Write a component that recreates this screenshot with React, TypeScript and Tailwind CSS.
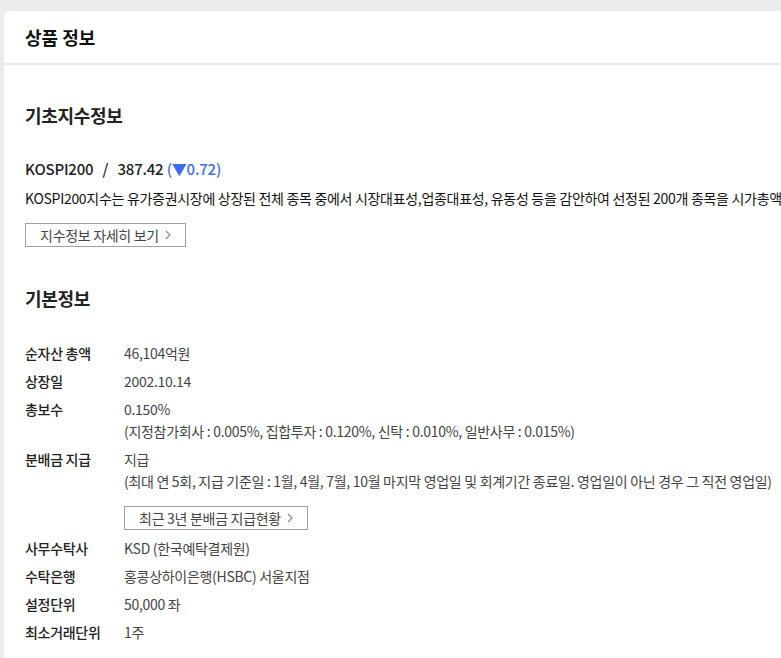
const font = { fontFamily: '"Noto Sans CJK KR", "Noto Sans", sans-serif' };

type Row = {
  label: string;
  value: string;
  sub?: string;
  button?: string;
};

const rows: Row[] = [
  { label: '순자산 총액', value: '46,104억원' },
  { label: '상장일', value: '2002.10.14' },
  {
    label: '총보수',
    value: '0.150%',
    sub: '(지정참가회사 : 0.005%, 집합투자 : 0.120%, 신탁 : 0.010%, 일반사무 : 0.015%)',
  },
  {
    label: '분배금 지급',
    value: '지급',
    sub: '(최대 연 5회, 지급 기준일 : 1월, 4월, 7월, 10월 마지막 영업일 및 회계기간 종료일. 영업일이 아닌 경우 그 직전 영업일)',
    button: '최근 3년 분배금 지급현황',
  },
  { label: '사무수탁사', value: 'KSD (한국예탁결제원)' },
  { label: '수탁은행', value: '홍콩상하이은행(HSBC) 서울지점' },
  { label: '설정단위', value: '50,000 좌' },
  { label: '최소거래단위', value: '1주' },
];

const Chevron = () => (
  <svg width="6" height="10" viewBox="0 0 6 10" className="ml-[6px] text-[#888]">
    <path d="M1 1l4 4-4 4" fill="none" stroke="currentColor" strokeWidth="1.1" />
  </svg>
);

const OutlineButton = ({ label, className = '' }: { label: string; className?: string }) => (
  <button
    className={`flex h-[24px] items-center justify-center border border-[#a0a0a0] bg-white text-[14px] tracking-[-0.3px] text-[#444] ${className}`}
  >
    {label}
    <Chevron />
  </button>
);

export default function App() {
  return (
    <div className="h-[658px] w-[781px] overflow-hidden bg-[#ececec] pl-[4px] pt-[11px]" style={font}>
      <div className="w-[900px] rounded-tl-[6px] bg-white">
        <div className="flex h-[54px] items-center border-b-2 border-[#ececec] pl-[21px]">
          <h1 className="text-[18px] font-bold text-[#111]">상품 정보</h1>
        </div>

        <div className="pl-[21px] pt-[37px] pb-[30px]">
          <h2 className="text-[18px] leading-[26px] font-bold tracking-[-0.3px] text-[#222]">기초지수정보</h2>

          <div className="mt-[30px] text-[15px] leading-[22px] font-medium tracking-[-0.2px] text-[#222]">
            KOSPI200 <span className="mx-[6px]">/</span> 387.42{' '}
            <span className="text-[#3d6cf0]">(▼0.72)</span>
          </div>
          <p className="mt-[7px] whitespace-nowrap text-[14px] leading-[22px] tracking-[-0.3px] text-[#111]">
            KOSPI200지수는 유가증권시장에 상장된 전체 종목 중에서 시장대표성,업종대표성, 유동성 등을 감안하여 선정된 200개 종목을 시가총액
            가중방식으로 산출한 지수입니다.
          </p>
          <OutlineButton label="지수정보 자세히 보기" className="mt-[14px] w-[161px]" />

          <h2 className="mt-[38px] text-[18px] leading-[26px] font-bold tracking-[-0.3px] text-[#222]">기본정보</h2>

          <dl className="mt-[31px] flex flex-col gap-[6px]">
            {rows.map((r) => (
              <div key={r.label} className="flex text-[14px] leading-[22px] tracking-[-0.3px]">
                <dt className="w-[99px] shrink-0 font-medium text-[#222]">{r.label}</dt>
                <dd className="whitespace-nowrap text-[#444]">
                  <div>{r.value}</div>
                  {r.sub && <div>{r.sub}</div>}
                  {r.button && (
                    <OutlineButton label={r.button} className="mt-[14px] mb-[1px] w-[184px]" />
                  )}
                </dd>
              </div>
            ))}
          </dl>
        </div>
      </div>
    </div>
  );
}
